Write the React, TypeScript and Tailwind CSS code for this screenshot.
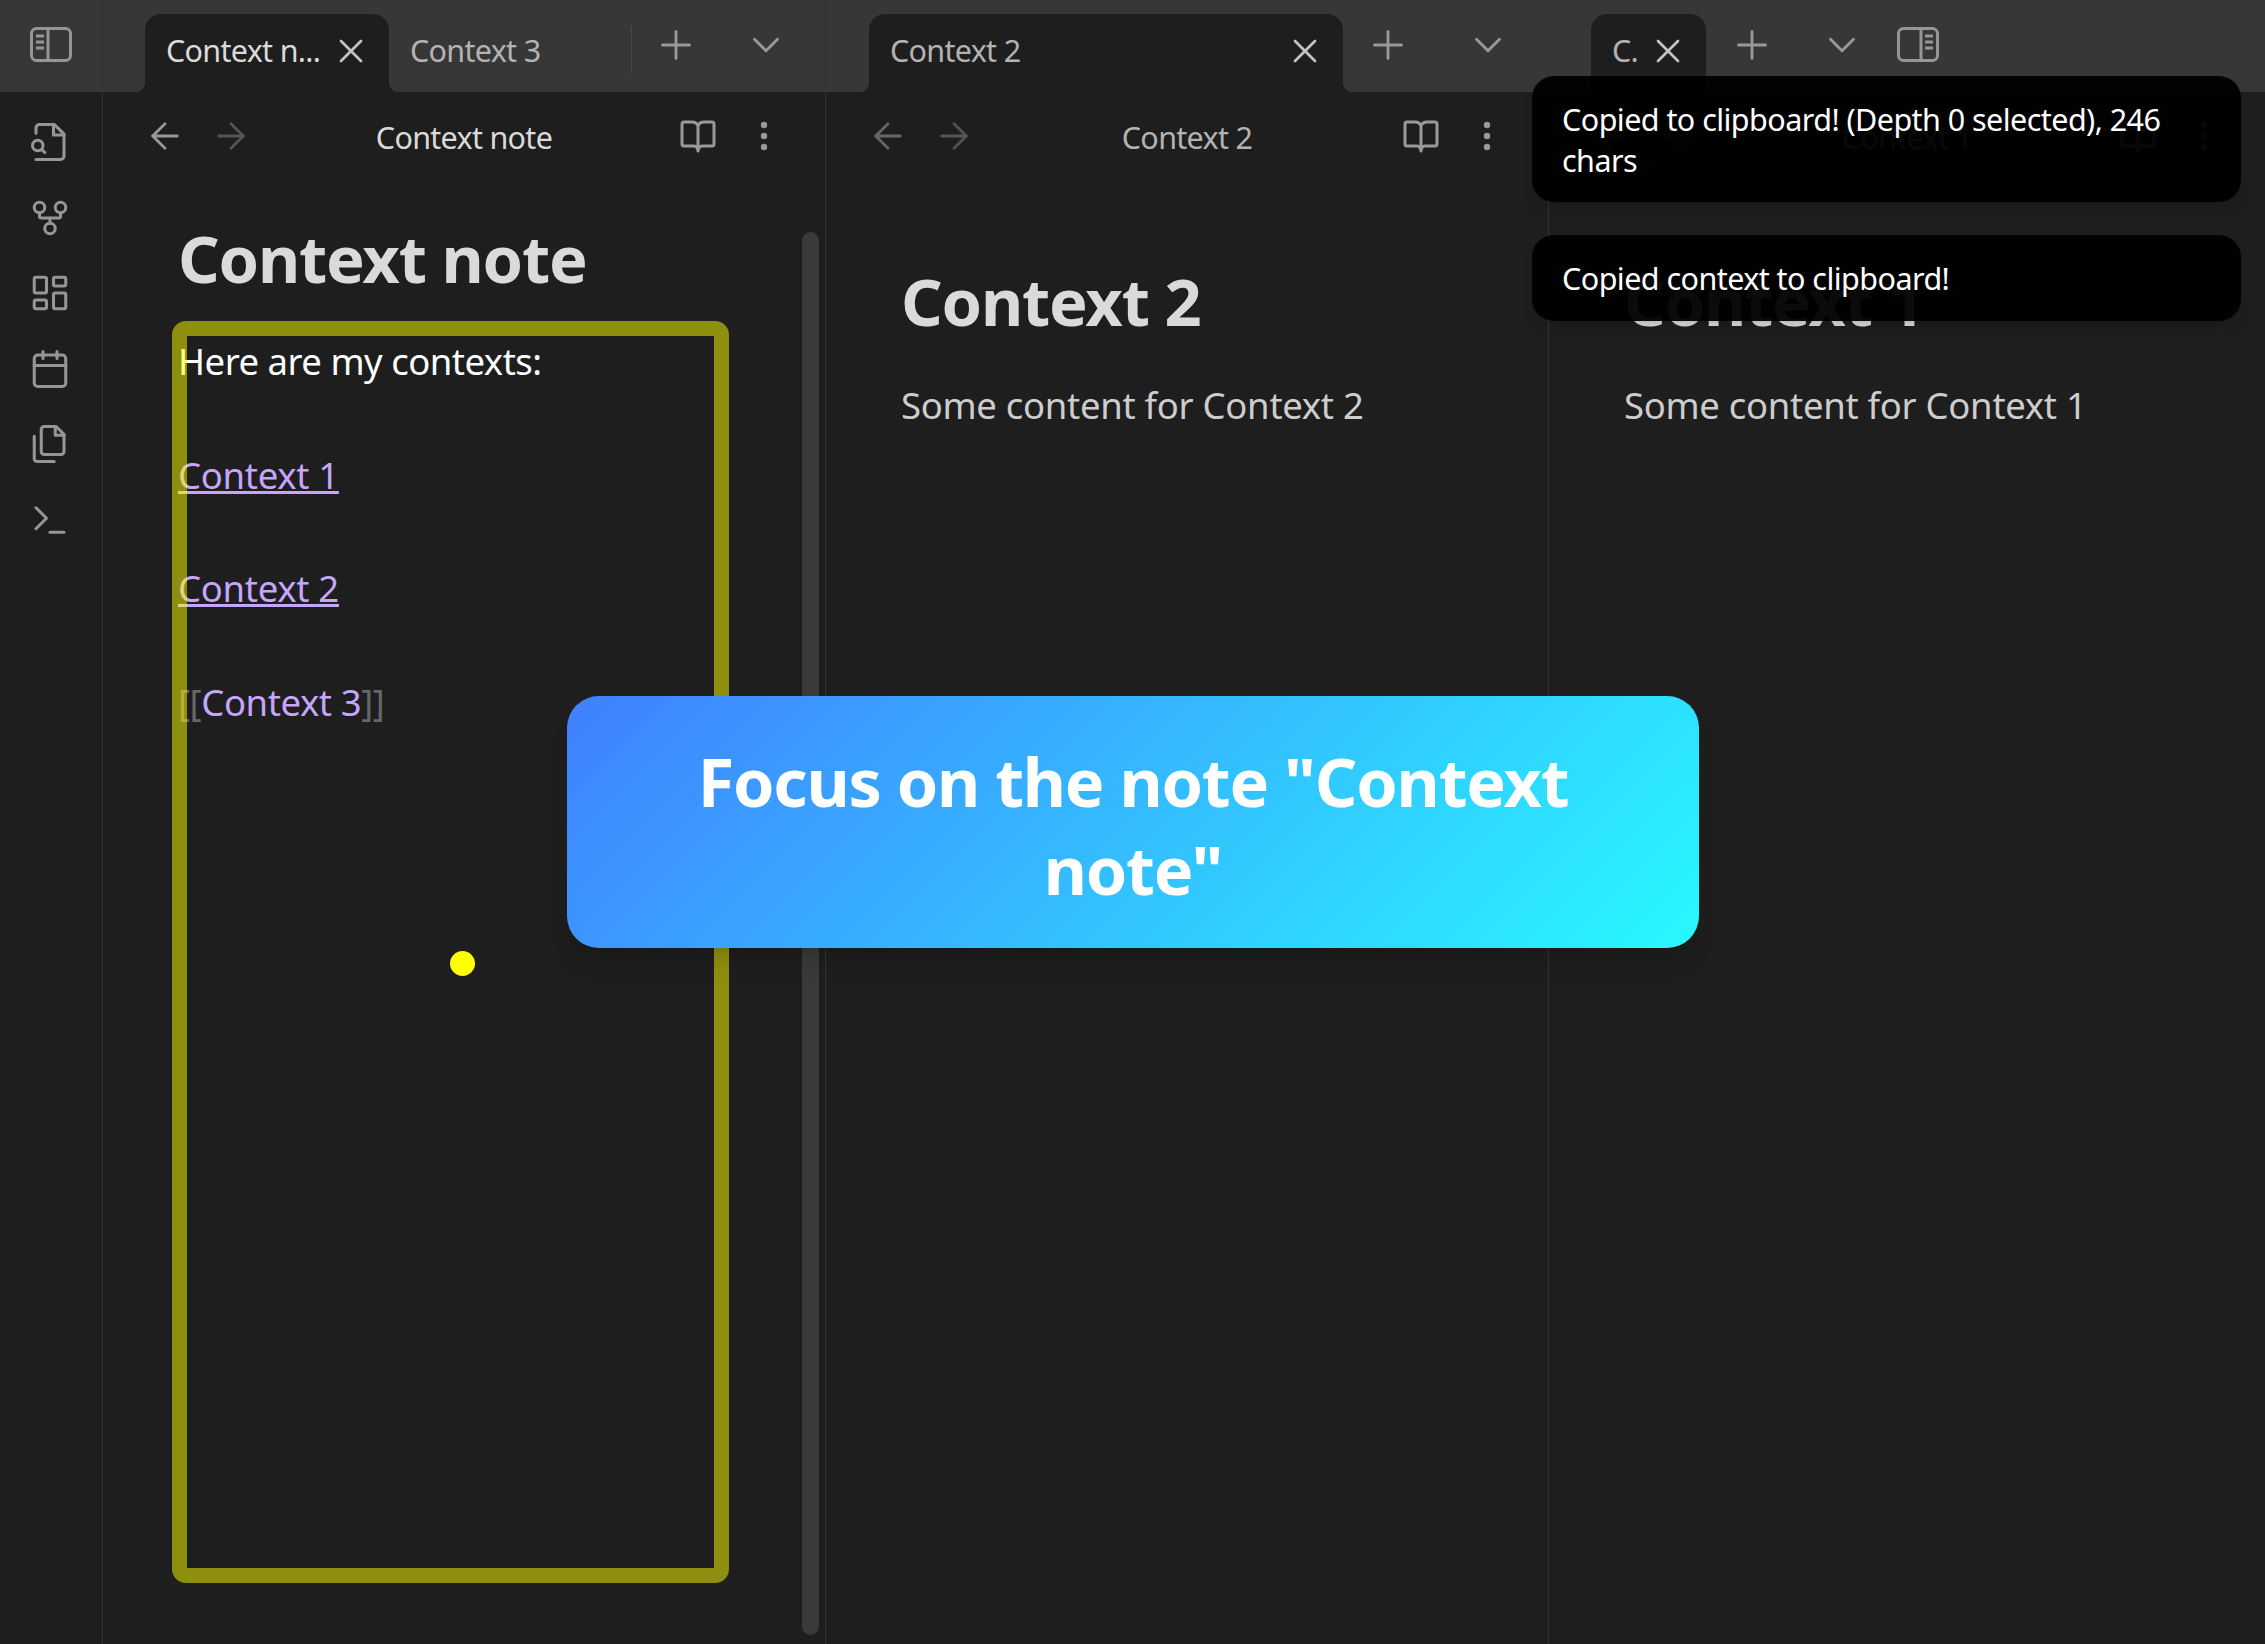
import { ArrowLeft, ArrowRight, ChevronDown, Plus, X } from 'lucide-react'

const FONT = "font-['Noto_Sans',sans-serif]"

function SidebarToggle({ side, className = '' }: { side: 'left' | 'right'; className?: string }) {
  return (
    <svg width="42" height="35" viewBox="0 0 42 35" fill="none" stroke="currentColor" strokeWidth="3" className={className}>
      <rect x="1.5" y="1.5" width="39" height="32" rx="5" />
      {side === 'left' ? <path d="M18 2v31M6 9h8M6 15h8M6 21h8" /> : <path d="M24 2v31M28 9h8M28 15h8M28 21h8" />}
    </svg>
  )
}

function Ribbon() {
  return (
    <div className="w-[103px] shrink-0 flex flex-col items-center border-r border-[#333] text-[#969696]">
      <div className="h-[92px] w-full bg-[#373737] flex items-start justify-center pt-[27px] pr-[1px]">
        <SidebarToggle side="left" />
      </div>
      <div className="flex flex-col items-center gap-[33.5px] pt-[29px] pr-[2px]">
        <svg width="42" height="42" viewBox="0 0 24 24" fill="none" stroke="currentColor" strokeWidth="1.75" strokeLinecap="round" strokeLinejoin="round">
          <path d="M4 22h14a2 2 0 0 0 2-2V7.5L14.5 2H6a2 2 0 0 0-2 2v3" />
          <polyline points="14 2 14 8 20 8" />
          <path d="M5 17a3 3 0 1 0 0-6 3 3 0 0 0 0 6z" />
          <path d="m9 18-1.5-1.5" />
        </svg>
        <svg width="42" height="42" viewBox="0 0 24 24" fill="none" stroke="currentColor" strokeWidth="1.75" strokeLinecap="round" strokeLinejoin="round">
          <circle cx="12" cy="18" r="3" />
          <circle cx="6" cy="6" r="3" />
          <circle cx="18" cy="6" r="3" />
          <path d="M18 9v2c0 .6-.4 1-1 1H7c-.6 0-1-.4-1-1V9" />
          <path d="M12 12v3" />
        </svg>
        <svg width="42" height="42" viewBox="0 0 24 24" fill="none" stroke="currentColor" strokeWidth="1.75" strokeLinecap="round" strokeLinejoin="round">
          <rect x="3" y="3" width="7" height="9" rx="1" />
          <rect x="14" y="3" width="7" height="5" rx="1" />
          <rect x="14" y="12" width="7" height="9" rx="1" />
          <rect x="3" y="16" width="7" height="5" rx="1" />
        </svg>
        <svg width="42" height="42" viewBox="0 0 24 24" fill="none" stroke="currentColor" strokeWidth="1.75" strokeLinecap="round" strokeLinejoin="round">
          <rect x="3" y="4" width="18" height="18" rx="2" />
          <path d="M16 2v4M8 2v4M3 10h18" />
        </svg>
        <svg width="42" height="42" viewBox="0 0 24 24" fill="none" stroke="currentColor" strokeWidth="1.75" strokeLinecap="round" strokeLinejoin="round">
          <path d="M15.5 2H8.6c-.4 0-.8.2-1.1.5-.3.3-.5.7-.5 1.1v12.8c0 .4.2.8.5 1.1.3.3.7.5 1.1.5h9.8c.4 0 .8-.2 1.1-.5.3-.3.5-.7.5-1.1V6.5L15.5 2z" />
          <path d="M3 7.6v12.8c0 .4.2.8.5 1.1.3.3.7.5 1.1.5h9.8" />
          <path d="M15 2v5h5" />
        </svg>
        <svg width="42" height="42" viewBox="0 0 24 24" fill="none" stroke="currentColor" strokeWidth="1.75" strokeLinecap="round" strokeLinejoin="round">
          <polyline points="4 17 10 11 4 5" />
          <line x1="12" y1="19" x2="20" y2="19" />
        </svg>
      </div>
    </div>
  )
}

function Tab({ title, width, active }: { title: string; width: string; active?: boolean }) {
  return (
    <div className={`${width} relative h-[78px] bg-[#1e1e1e] rounded-t-[16px] flex items-center pl-[21px] pr-[18px] pb-[4px]`}>
      {/* little flared corners where the tab meets the strip */}
      <span className="absolute left-[-10px] bottom-0 w-[10px] h-[10px] bg-[radial-gradient(circle_at_0_0,#373737_10px,#1e1e1e_10.5px)]" />
      <span className="absolute right-[-10px] bottom-0 w-[10px] h-[10px] bg-[radial-gradient(circle_at_100%_0,#373737_10px,#1e1e1e_10.5px)]" />
      <span className={`text-[30.5px] tracking-[-0.7px] flex-1 whitespace-nowrap ${active ? 'text-[#dadada]' : 'text-[#b3b3b3]'}`}>{title}</span>
      <X size={40} strokeWidth={1.6} className="text-[#c4c4c4] shrink-0" />
    </div>
  )
}

function ViewHeader({ title, active }: { title: string; active?: boolean }) {
  return (
    <div className="h-[88px] flex items-center pl-[41px] pr-[57px]">
      <ArrowLeft size={42} strokeWidth={1.6} className={active ? 'text-[#999]' : 'text-[#666]'} />
      <ArrowRight size={42} strokeWidth={1.6} className="text-[#555] ml-[24px]" />
      <div className={`flex-1 text-center text-[30.5px] tracking-[-0.7px] pt-[4px] pr-[4px] ${active ? 'text-[#dadada]' : 'text-[#b3b3b3]'}`}>{title}</div>
      <svg width="36" height="34" viewBox="0 0 36 34" fill="none" stroke="currentColor" strokeWidth="3" strokeLinejoin="round" className="text-[#999]">
        <path d="M18 7C17 4 15 3 12 3H4a2 2 0 0 0-2 2v20a2 2 0 0 0 2 2h10c2 0 3.5 1 4 5 .5-4 2-5 4-5h10a2 2 0 0 0 2-2V5a2 2 0 0 0-2-2h-8c-3 0-5 1-6 4zv24" />
      </svg>
      <svg width="8" height="30" viewBox="0 0 8 30" fill="currentColor" className="text-[#999] ml-[44px]">
        <circle cx="4" cy="4" r="3.2" />
        <circle cx="4" cy="15" r="3.2" />
        <circle cx="4" cy="26" r="3.2" />
      </svg>
    </div>
  )
}

function NoteBody({ title, text }: { title: string; text: string }) {
  return (
    <div className="px-[75px] pt-[79px]">
      <h1 className="text-[65px] leading-[84px] font-bold text-[#dadada] tracking-[-1.2px]">{title}</h1>
      <p className="mt-[34px] text-[36.5px] leading-[56px] text-[#cdcdcd] tracking-[-0.3px]">{text}</p>
    </div>
  )
}

export default function App() {
  return (
    <div className={`${FONT} relative w-[2265px] h-[1644px] overflow-hidden bg-[#1e1e1e] flex`}>
      <Ribbon />

      {/* Pane 1 */}
      <div className="w-[723px] shrink-0 flex flex-col border-r border-[#333]">
        <div className="h-[92px] bg-[#373737] flex items-end pl-[42px]">
          <Tab title="Context n..." width="w-[244px]" active />
          <div className="w-[242px] h-[78px] flex items-center pl-[21px] pb-[4px]">
            <span className="text-[30.5px] tracking-[-0.7px] text-[#b3b3b3]">Context 3</span>
          </div>
          <div className="w-px h-[47px] bg-[#4a4a4a] mb-[19px]" />
          <Plus size={46} strokeWidth={1.5} className="text-[#999] ml-[21px] mb-[24px]" />
          <ChevronDown size={46} strokeWidth={1.5} className="text-[#999] ml-[44px] mb-[24px]" />
        </div>
        <ViewHeader title="Context note" active />
        <div className="relative flex-1 px-[75px] pt-[36px]">
          <h1 className="text-[65px] leading-[84px] font-bold text-[#dadada] tracking-[-1.2px]">Context note</h1>
          <p className="mt-[33px] text-[36.5px] leading-[56px] text-white tracking-[-0.5px]">Here are my contexts:</p>
          <p className="mt-[58px] text-[36.5px] leading-[56px] text-[#c6a5fc] underline tracking-[-0.3px]">Context 1</p>
          <p className="mt-[57px] text-[36.5px] leading-[56px] text-[#c6a5fc] underline tracking-[-0.3px]">Context 2</p>
          <p className="mt-[58px] text-[36.5px] leading-[56px] text-[#c6a5fc] tracking-[-0.4px]">
            <span className="text-[#666]">[[</span>Context 3<span className="text-[#666]">]]</span>
          </p>
          <div className="absolute right-[6px] top-[52px] w-[17px] h-[1403px] rounded-full bg-[#3a3a3a]" />
        </div>
      </div>

      {/* Pane 2 */}
      <div className="w-[723px] shrink-0 flex flex-col border-r border-[#333]">
        <div className="h-[92px] bg-[#373737] flex items-end pl-[43px]">
          <Tab title="Context 2" width="w-[474px]" />
          <Plus size={46} strokeWidth={1.5} className="text-[#999] ml-[22px] mb-[24px]" />
          <ChevronDown size={46} strokeWidth={1.5} className="text-[#999] ml-[54px] mb-[24px]" />
        </div>
        <ViewHeader title="Context 2" />
        <NoteBody title="Context 2" text="Some content for Context 2" />
      </div>

      {/* Pane 3 */}
      <div className="flex-1 flex flex-col">
        <div className="h-[92px] bg-[#373737] flex items-end pl-[42px]">
          <Tab title="C." width="w-[115px]" />
          <Plus size={46} strokeWidth={1.5} className="text-[#999] ml-[23px] mb-[24px]" />
          <ChevronDown size={46} strokeWidth={1.5} className="text-[#999] ml-[44px] mb-[24px]" />
          <SidebarToggle side="right" className="text-[#969696] ml-[32px] mb-[30px]" />
        </div>
        <ViewHeader title="Context 1" />
        <NoteBody title="Context 1" text="Some content for Context 1" />
      </div>

      {/* Highlight over the active note */}
      <div className="absolute left-[172px] top-[321px] w-[557px] h-[1262px] rounded-[14px] border-[15px] border-[#ffff00]/50" />
      <div className="absolute left-[450px] top-[951px] w-[25px] h-[25px] rounded-full bg-[#ffff00]" />

      {/* Notices */}
      <div className="absolute left-[1532px] top-[76px] w-[709px] flex flex-col gap-[33px]">
        <div className="bg-black/95 rounded-[22px] px-[30px] pt-[23px] pb-[21px] text-[30.5px] leading-[41px] tracking-[-0.55px] text-white shadow-lg">
          Copied to clipboard! (Depth 0 selected), 246 chars
        </div>
        <div className="bg-black/95 rounded-[22px] px-[30px] pt-[23px] pb-[22px] text-[30.5px] leading-[41px] tracking-[-0.55px] text-white shadow-lg">
          Copied context to clipboard!
        </div>
      </div>

      {/* Task banner */}
      <div className="absolute left-[567px] top-[696px] w-[1132px] h-[252px] rounded-[32px] bg-[linear-gradient(135deg,#4080ff,#28f8ff)] flex items-center justify-center text-center px-[100px] pt-[6px] shadow-xl">
        <span className="text-[66.5px] leading-[88px] font-bold text-white tracking-[-1.2px]">Focus on the note "Context note"</span>
      </div>
    </div>
  )
}
